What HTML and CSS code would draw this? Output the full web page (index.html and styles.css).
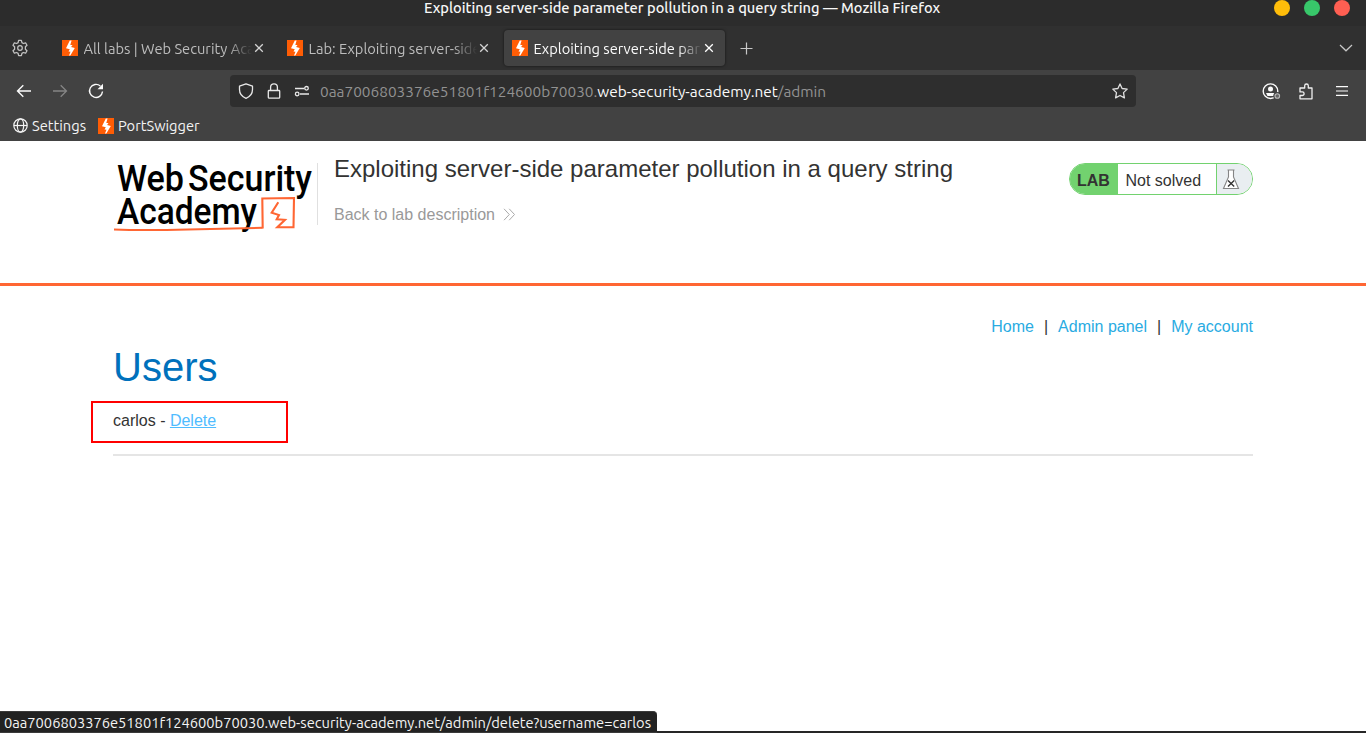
FILE: index.html
```html
<!DOCTYPE html>
<html lang="en">
<head>
<meta charset="utf-8">
<title>Exploiting server-side parameter pollution in a query string</title>
<link rel="stylesheet" href="styles.css">
</head>
<body>
<svg class="defs" width="0" height="0">
  <symbol id="bolt" viewBox="0 0 16 16"><rect width="16" height="16" fill="#ff5d05"/><path d="M9.600.6H7.800L4 8.300l3.800.9-1.300 2.300 2 .2-1.500 3.800h1.300l4.500-7.400-3.700-1L10.500 5H8.300z" fill="#fff"/></symbol>
  <symbol id="close" viewBox="0 0 10 10"><path d="M1.2 1.2l7.6 7.6M8.8 1.2 1.2 8.8" fill="none" stroke="currentColor" stroke-width="1.3"/></symbol>
</svg>
<div class="window">
  <header class="titlebar">
    <span class="title">Exploiting server-side parameter pollution in a query string — Mozilla Firefox</span>
    <div class="controls"><i class="min"></i><i class="max"></i><i class="quit"></i></div>
  </header>
  <div class="tabbar">
    <svg class="gear" width="18" height="18" viewBox="0 0 18 18"><g fill="none" stroke="#c3c3c3" stroke-width="1.25" stroke-linejoin="round"><path d="M7.6 1.4h2.8l.5 2.2 1.5.9 2.2-.7L16 6.200l-1.600 1.600v2.400L16 11.800l-1.400 2.400-2.200-.7-1.500.9-.5 2.200H7.600l-.5-2.200-1.500-.9-2.200.7L2 11.800l1.600-1.600V7.800L2 6.200l1.400-2.400 2.200.7 1.500-.9z"/><circle cx="9" cy="9" r="2.300"/></g></svg>
    <div class="tab"><svg width="16" height="16"><use href="#bolt"/></svg><span class="label">All labs | Web Security Academy</span><svg class="x" width="10" height="10"><use href="#close"/></svg></div>
    <div class="tab"><svg width="16" height="16"><use href="#bolt"/></svg><span class="label">Lab: Exploiting server-side parameter</span><svg class="x" width="10" height="10"><use href="#close"/></svg></div>
    <div class="tab active"><svg width="16" height="16"><use href="#bolt"/></svg><span class="label">Exploiting server-side parameter</span><svg class="x" width="10" height="10"><use href="#close"/></svg></div>
    <svg class="plus" width="13" height="13" viewBox="0 0 13 13"><path d="M6.500.5v12M.5 6.500h12" stroke="#c8c8c8" stroke-width="1.200"/></svg>
    <svg class="chevron" width="14" height="8" viewBox="0 0 14 8"><path d="M1 1l6 5.800L13 1" fill="none" stroke="#c8c8c8" stroke-width="1.200"/></svg>
  </div>
  <div class="navbar">
    <svg class="back" width="16" height="14" viewBox="0 0 16 14"><path d="M15 7H1.800M7.300 1.200 1.500 7l5.800 5.800" fill="none" stroke="#fbfbfb" stroke-width="1.400"/></svg>
    <svg class="fwd" width="16" height="14" viewBox="0 0 16 14"><path d="M1 7h13.200M8.700 1.200 14.500 7l-5.800 5.800" fill="none" stroke="#858585" stroke-width="1.300"/></svg>
    <svg class="reload" width="16" height="16" viewBox="0 0 16 16"><path d="M12.300 3A6.500 6.500 0 1 0 14.500 8.500" fill="none" stroke="#fbfbfb" stroke-width="1.400"/><path d="M15 .8v5.500H9.500z" fill="#fbfbfb"/></svg>
    <div class="urlbar">
      <svg class="shield" width="16" height="16" viewBox="0 0 16 16"><path d="M8 .8 14.500 3.200v3.300C14.500 11 12 13.700 8 15.300 4 13.700 1.500 11 1.500 6.500V3.200z" fill="none" stroke="#e8e8e8" stroke-width="1.300" stroke-linejoin="round"/></svg>
      <svg class="lock" width="14" height="16" viewBox="0 0 14 16"><path d="M2 7.500h10q.7 0 .7.700v6q0 .9-.9.900H2.200q-.9 0-.9-.9v-6q0-.7.700-.7zM3.600 7.500V4.200a3.400 3.400 0 0 1 6.800 0v3.300" fill="none" stroke="#e8e8e8" stroke-width="1.300"/></svg>
      <svg class="perm" width="16" height="12" viewBox="0 0 16 12"><g fill="none" stroke="#e8e8e8" stroke-width="1.300"><path d="M1 3.500h9M6 9h9"/><circle cx="12.500" cy="3.300" r="1.800"/><circle cx="3.200" cy="9" r="1.800"/></g></svg>
      <span class="url"><span class="sub">0aa7006803376e51801f124600b70030.</span><span class="host">web-security-academy.net</span><span class="path">/admin</span></span>
      <svg class="star" width="16" height="16" viewBox="0 0 16 16"><path d="M8 .9l2.100 4.600 5.100.6-3.700 3.500.9 5.300L8 12.500l-4.400 2.400.9-5.300L.8 6.100l5.100-.6z" fill="none" stroke="#e0e0e0" stroke-width="1.300" stroke-linejoin="round"/></svg>
    </div>
    <svg class="account" width="19" height="17" viewBox="0 0 19 17"><circle cx="8.500" cy="8.200" r="7.300" fill="none" stroke="#fbfbfb" stroke-width="1.400"/><circle cx="8.500" cy="6" r="2.500" fill="#fbfbfb"/><path d="M4 10h9l-1.500 3h-6z" fill="#fbfbfb"/><circle cx="15.300" cy="13" r="4" fill="#424242"/><circle cx="15.300" cy="13" r="2.300" fill="#666" stroke="#bbb" stroke-width="1.100"/></svg>
    <svg class="puzzle" width="14" height="17" viewBox="0 0 14 17"><path d="M1 5h4.700V2.800a1.800 1.800 0 0 1 3.600 0V5H13v10.800H1v-3.300h2.300a1.800 1.800 0 0 0 0-3.600H1z" fill="none" stroke="#f0f0f0" stroke-width="1.300" stroke-linejoin="round"/></svg>
    <svg class="menu" width="12" height="10" viewBox="0 0 12 10"><path d="M0 .7h12M0 5h12M0 9.300h12" stroke="#fbfbfb" stroke-width="1.200"/></svg>
  </div>
  <div class="bookmarks">
    <svg width="15" height="15" viewBox="0 0 15 15"><g fill="none" stroke="#f4f4f4" stroke-width="1.200"><circle cx="7.500" cy="7.500" r="6.700"/><ellipse cx="7.500" cy="7.500" rx="3.200" ry="6.700"/><path d="M1 7.500h13"/></g></svg>
    <span class="bm bm-settings">Settings</span>
    <svg width="16" height="16"><use href="#bolt"/></svg>
    <span class="bm">PortSwigger</span>
  </div>
  <main class="page">
    <section class="lab-header">
      <svg class="logo" width="200" height="76" viewBox="0 0 200 76">
        <g class="logo-text">
          <text x="4" y="33" textLength="67" lengthAdjust="spacingAndGlyphs">Web</text>
          <text x="75" y="33" textLength="124" lengthAdjust="spacingAndGlyphs">Security</text>
          <text x="4" y="66" textLength="140" lengthAdjust="spacingAndGlyphs">Academy</text>
        </g>
        <path d="M1 71.600Q30 72.600 75 71.600T149.500 69.800" fill="none" stroke="#ff6633" stroke-width="2"/>
        <path d="M149.700 70.500 149.300 40.500 181 40 180.500 69.300 164.300 69.300 172 61.800 163.700 61.300 166 57 158.700 54.700 165.300 44.300" fill="none" stroke="#ff6633" stroke-width="2.100"/>
      </svg>
      <div class="lab-title">
        <h2>Exploiting server-side parameter pollution in a query string</h2>
        <a class="back-link">Back to lab description <svg width="13" height="13" viewBox="0 0 13 13"><path d="M1 .8 6.300 6.500 1 12.200M6.200.8l5.300 5.700-5.300 5.700" fill="none" stroke="#aaa" stroke-width="1"/></svg></a>
      </div>
      <div class="status">
        <b>LAB</b><span>Not solved</span>
        <div class="flask"><svg width="18" height="21" viewBox="0 0 18 21"><path d="M5.500 1h7M6.500 1v7L1.500 19.500h15L11.500 8V1" fill="#fff" stroke="#858585" stroke-width="1.100"/><path d="M6 11.500l6.200 6M12.200 11.500 6 17.500" stroke="#333" stroke-width="1.400"/></svg></div>
      </div>
    </section>
    <section class="content">
      <nav class="links"><a>Home</a><i>|</i><a>Admin panel</a><i>|</i><a>My account</a></nav>
      <h1>Users</h1>
      <div class="user-row">carlos - <a>Delete</a></div>
      <hr>
    </section>
  </main>
</div>
<div class="bottom-edge"></div>
<div class="link-status"><span>0aa7006803376e51801f124600b70030.web-security-academy.net/admin/delete?username=carlos</span></div>
</body>
</html>
```
FILE: styles.css
```css
* { box-sizing: border-box; }
body { margin: 0; background: #fff; font-family: "Liberation Sans", Arial, sans-serif; font-size: 16px; color: #333332; }
.defs { position: absolute; }
.window { width: 1366px; height: 733px; overflow: hidden; }
.titlebar, .tabbar, .navbar, .bookmarks, .link-status { font-family: Ubuntu, "Noto Sans", sans-serif; font-size: 14.667px; white-space: nowrap; }
svg { display: block; flex: none; }

.titlebar { height: 26px; background: #2c2c2c; display: grid; grid-template-columns: 1fr 92px; padding-left: 424px; color: #f7f7f7; }
.title { line-height: 16px; font-weight: 500; }
.controls { display: flex; gap: 14px; }
.controls i { width: 16px; height: 16px; border-radius: 50%; }
.min { background: #ffbd0a; }
.max { background: #38c76a; }
.quit { background: #ff5f52; }

.tabbar { height: 44px; background: #303030; display: flex; align-items: center; padding-left: 11px; }
.gear { margin-right: 25px; }
.tab { width: 221px; height: 36px; margin-right: 4px; padding: 0 11px 0 8px; display: flex; align-items: center; color: #bdbdbd; border-radius: 4px; }
.tab.active { background: #424242; color: #fbfbfb; box-shadow: 0 0 3px rgba(0,0,0,.6); }
.label { width: 168px; margin-left: 5.500px; margin-right: 2.500px; overflow: hidden; padding-top: 2px; line-height: 20px; mask-image: linear-gradient(to right, #000 144px, transparent 168px); }
.x { color: #d4d4d4; }
.active .x { color: #fff; }
.plus { margin-left: 11px; }
.chevron { margin-left: auto; margin-right: 13px; }

.navbar { height: 42px; background: #424242; display: flex; align-items: center; padding-left: 16px; }
.fwd { margin-left: 20px; }
.reload { margin-left: 20px; }
.urlbar { width: 906px; height: 32px; margin-left: 126px; background: #2e2e2e; border-radius: 4px; display: flex; align-items: center; padding: 0 8px; }
.lock { margin-left: 13px; }
.perm { margin-left: 13px; }
.url { margin-left: 10px; padding-top: 2px; color: #929292; line-height: 20px; font-size: 15.4px; }
.host { color: #fbfbfb; }
.star { margin-left: auto; }
.account { margin-left: 126px; }
.puzzle { margin-left: 18px; }
.menu { margin-left: 23px; }

.bookmarks { height: 29px; background: #424242; display: flex; align-items: center; padding: 0 0 2px 13px; color: #f4f4f4; }
.bm { margin-left: 4px; line-height: 20px; }
.bm-settings { width: 54px; margin-right: 12px; }

.lab-header { height: 145px; border-bottom: 3px solid #ff6633; padding: 14px 113px 0; display: flex; align-items: flex-start; }
.logo { margin-top: 3px; }
.logo-text { font: 500 37.5px Roboto, sans-serif; fill: #000; }
.lab-title { margin-left: 4px; margin-top: 8px; height: 62px; border-left: 1px solid #e0e0e0; padding-left: 16px; }
h2 { margin: -8px 0 0; font-size: 24px; font-weight: 400; line-height: 28px; white-space: nowrap; }
.back-link { display: flex; align-items: center; gap: 8px; margin-top: 23px; line-height: 18px; color: #999; }
.back-link svg { margin-top: -2px; }
.status { margin: 8px 0 0 auto; width: 184px; height: 32px; border: 1px solid #72d26f; border-radius: 16px; overflow: hidden; display: flex; line-height: 33px; background: #fff; }
.status b { width: 48px; padding-left: 7px; background: #72d26f; }
.status span { width: 98px; padding-left: 7.500px; }
.flask { flex: 1; border-left: 1px solid #72d26f; background: #e9eef1; padding: 5px 0 0 5px; }

.content { padding: 32px 113px 0; }
.links { display: flex; justify-content: flex-end; gap: 10px; line-height: 18px; color: #29abe2; }
.links i { font-style: normal; color: #333; }
h1 { margin: 8px 0 0; font-size: 40px; line-height: 46px; font-weight: 400; color: #0071bc; }
.user-row { width: 197px; height: 42px; margin: 11px 0 0 -22px; border: 2px solid #f00; padding: 9px 20px 7px; line-height: 18px; }
.user-row a { color: #4fbcff; text-decoration: underline; }
hr { border: 0; height: 2px; background: #e5e5e5; margin: 11px 0 0; }

.bottom-edge { position: absolute; left: 0; top: 731px; width: 1366px; height: 2px; background: #262626; }
.link-status { position: absolute; left: 0; top: 711px; width: 657px; height: 22px; background: #222; border-top: 1px solid #3a3a3a; border-bottom: 1px solid #3a3a3a; border-top-right-radius: 4px; color: #f4f4f4; padding-left: 4px; line-height: 22px; }
```
